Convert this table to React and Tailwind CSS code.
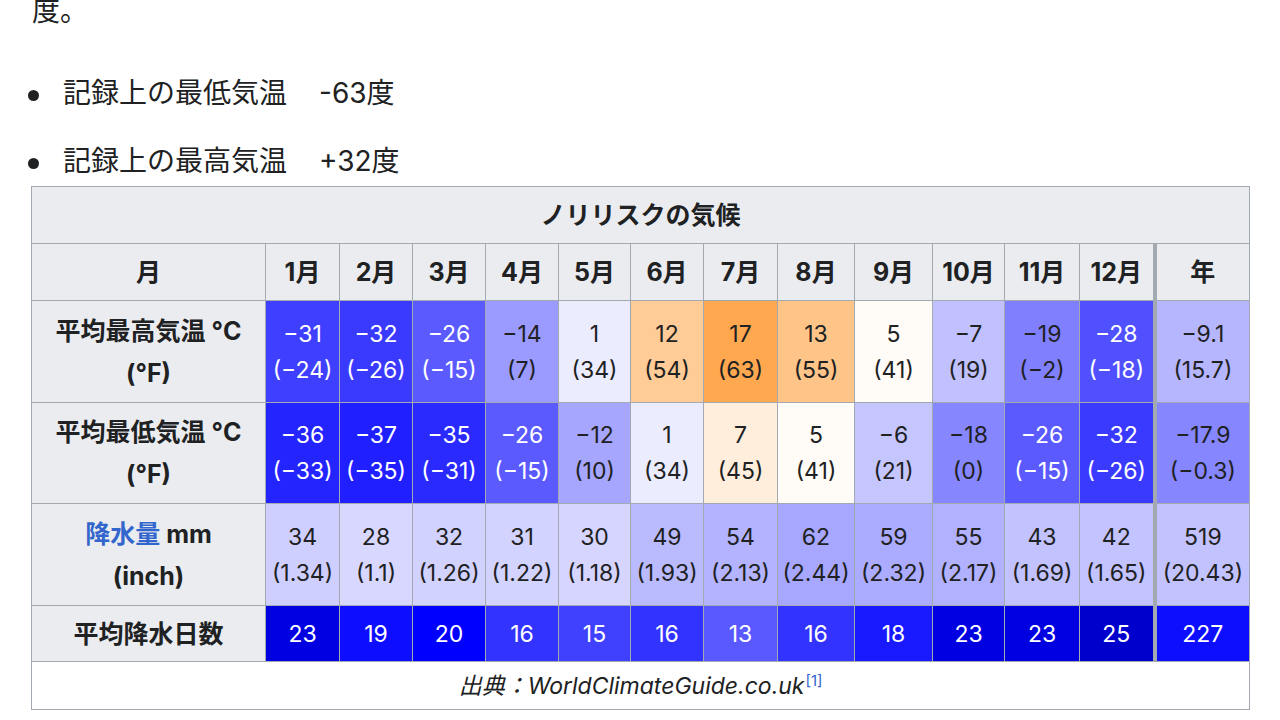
import React from 'react'

const months = ['1月', '2月', '3月', '4月', '5月', '6月', '7月', '8月', '9月', '10月', '11月', '12月', '年']

const colWidths = [
  'w-[234px]', 'w-[74px]', 'w-[73px]', 'w-[73px]', 'w-[73px]', 'w-[72px]', 'w-[73px]',
  'w-[74px]', 'w-[77px]', 'w-[78px]', 'w-[72px]', 'w-[75px]', 'w-[75px]', 'w-[95px]',
]

const highC = [-31, -32, -26, -14, 1, 12, 17, 13, 5, -7, -19, -28, -9.1]
const highF = ['−24', '−26', '−15', '7', '34', '54', '63', '55', '41', '19', '−2', '−18', '15.7']
const lowC = [-36, -37, -35, -26, -12, 1, 7, 5, -6, -18, -26, -32, -17.9]
const lowF = ['−33', '−35', '−31', '−15', '10', '34', '45', '41', '21', '0', '−15', '−26', '−0.3']
const precip = [34, 28, 32, 31, 30, 49, 54, 62, 59, 55, 43, 42, 519]
const inch = ['1.34', '1.1', '1.26', '1.22', '1.18', '1.93', '2.13', '2.44', '2.32', '2.17', '1.69', '1.65', '20.43']
const days = [23, 19, 20, 16, 15, 16, 13, 16, 18, 23, 23, 25, 227]

const clamp = (v) => Math.round(Math.max(0, Math.min(255, v)))

// colour scales, same idea as the wiki weather box
const tempColor = (t) => {
  if (t <= 4.5) {
    const v = clamp((255 * (t + 42.75)) / 47.25)
    return { bg: `rgb(${v},${v},255)`, light: v < 100 }
  }
  const g = clamp(255 - (t - 4.5) * 7)
  const b = clamp(255 - (t - 4.5) * 14)
  return { bg: `rgb(255,${g},${b})`, light: false }
}

const precipColor = (mm) => {
  const v = clamp(255 * (1 - mm / 180))
  return { bg: `rgb(${v},${v},255)`, light: v < 100 }
}

const daysColor = (d) => {
  if (d <= 20) {
    const v = clamp(255 * (1 - d / 20))
    return { bg: `rgb(${v},${v},255)`, light: true }
  }
  const b = clamp(255 - (d - 20) * 10)
  return { bg: `rgb(0,0,${b})`, light: true }
}

const fmt = (n) => String(n).replace('-', '−')

const thCls = 'border border-[#a2a9b1] bg-[#eaecf0] font-bold text-[25px] leading-[42px] p-0 text-center align-middle'
const tdCls = 'border border-[#a2a9b1] text-[23px] leading-[36px] text-center whitespace-nowrap p-0 align-middle'

const Cell = ({ i, color, children }) => (
  <td
    className={`${tdCls} ${i === 12 ? 'border-l-4 border-l-[#a2a9b1]' : ''} ${color.light ? 'text-white' : 'text-[#202122]'}`}
    style={{ backgroundColor: color.bg }}
  >
    {children}
  </td>
)

const App = () => {
  return (
    <div className="bg-white min-h-screen px-[31px] text-[#202122] font-[Inter,'Noto_Sans_CJK_JP',sans-serif] overflow-hidden">
      <p className="text-[28px] leading-[22px] pl-[1px]">度。</p>

      <ul className="mt-[49px]">
        <li className="flex items-center text-[28px] leading-[44px]">
          <span className="w-[11px] h-[11px] rounded-full bg-[#202122] ml-[-3px] mr-[24px] mt-[5px] shrink-0" />
          <span>記録上の最低気温　<span className="ml-[4px]">-63度</span></span>
        </li>
        <li className="flex items-center text-[28px] leading-[44px] mt-[24px]">
          <span className="w-[11px] h-[11px] rounded-full bg-[#202122] ml-[-3px] mr-[24px] mt-[5px] shrink-0" />
          <span>記録上の最高気温　<span className="ml-[4px]">+32度</span></span>
        </li>
      </ul>

      <table className="mt-[3px] w-[1218px] table-fixed border-collapse border border-[#a2a9b1]">
        <colgroup>
          {colWidths.map((w, i) => (
            <col key={i} className={w} />
          ))}
        </colgroup>
        <thead>
          <tr className="h-[57px]">
            <th colSpan={14} className={thCls}>ノリリスクの気候</th>
          </tr>
          <tr className="h-[57px]">
            <th className={thCls}>月</th>
            {months.map((m, i) => (
              <th key={m} className={`${thCls} whitespace-nowrap ${i === 12 ? 'border-l-4' : ''}`}>{m}</th>
            ))}
          </tr>
        </thead>
        <tbody>
          <tr className="h-[102px]">
            <th className={thCls}>平均最高気温 °C<br />(°F)</th>
            {highC.map((t, i) => (
              <Cell key={i} i={i} color={tempColor(t)}>
                {fmt(t)}<br />({highF[i]})
              </Cell>
            ))}
          </tr>
          <tr className="h-[101px]">
            <th className={thCls}>平均最低気温 °C<br />(°F)</th>
            {lowC.map((t, i) => (
              <Cell key={i} i={i} color={tempColor(t)}>
                {fmt(t)}<br />({lowF[i]})
              </Cell>
            ))}
          </tr>
          <tr className="h-[102px]">
            <th className={thCls}>
              <span className="text-[#3366cc]">降水量</span> mm<br />(inch)
            </th>
            {precip.map((mm, i) => (
              <Cell key={i} i={i} color={precipColor(i === 12 ? mm / 12 : mm)}>
                {mm}<br />({inch[i]})
              </Cell>
            ))}
          </tr>
          <tr className="h-[56px]">
            <th className={thCls}>平均降水日数</th>
            {days.map((d, i) => (
              <Cell key={i} i={i} color={daysColor(i === 12 ? d / 12 : d)}>
                {d}
              </Cell>
            ))}
          </tr>
          <tr className="h-[48px]">
            <td colSpan={14} className="border border-[#a2a9b1] bg-white text-center italic text-[23px] leading-[32px] p-0">
              出典：WorldClimateGuide.co.uk
              <sup className="not-italic text-[15px] text-[#3366cc] ml-[1px]">[1]</sup>
            </td>
          </tr>
        </tbody>
      </table>
    </div>
  )
}

export default App
